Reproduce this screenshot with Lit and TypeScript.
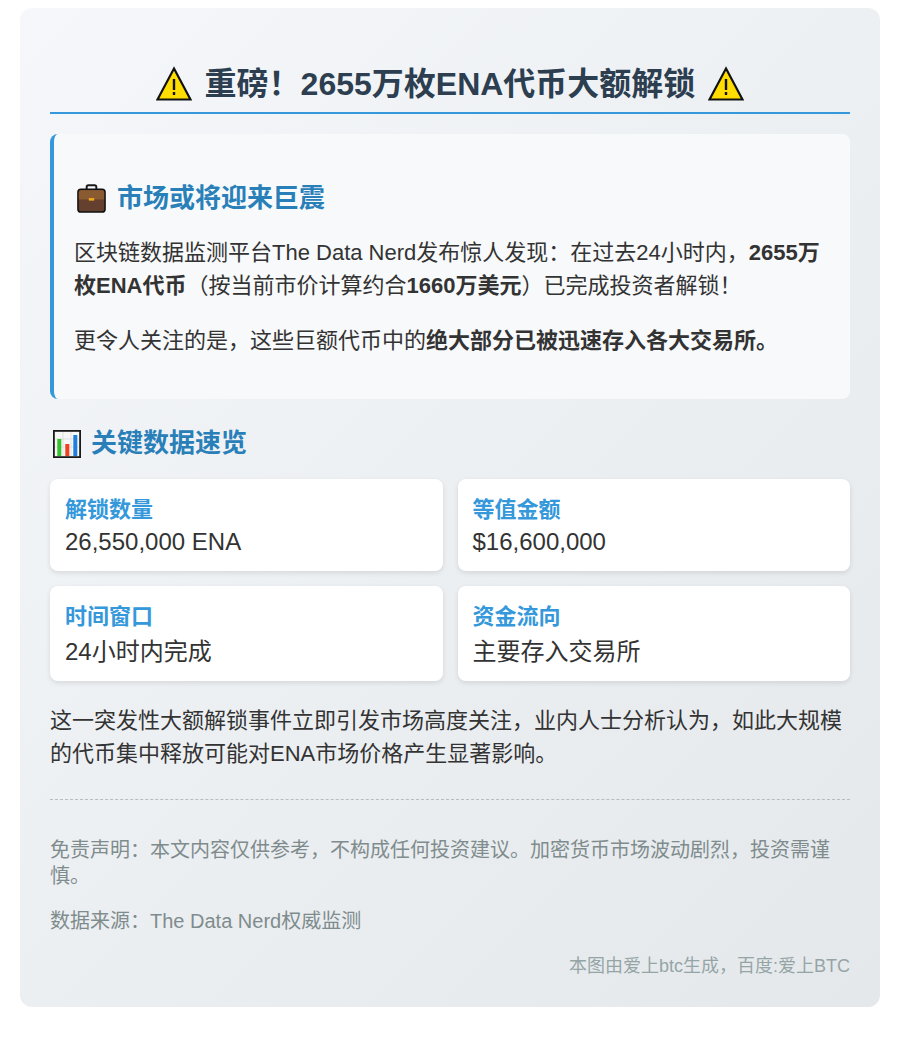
import { LitElement, html, css } from "lit";
import { customElement } from "lit/decorators.js";

const warn = html`<svg class="warn" viewBox="0 0 36 36" aria-hidden="true"><path d="M18 2.5 L34.5 33.5 L1.5 33.5 Z" fill="#ffdd00" stroke="#111" stroke-width="2.2" stroke-linejoin="miter"/><rect x="16.8" y="13" width="2.4" height="11" fill="#111"/><rect x="16.8" y="26" width="2.4" height="3" fill="#111"/></svg>`;
const brief = html`<svg class="ico brief" viewBox="0 0 30 30" aria-hidden="true"><path d="M10 6V3Q10 1.2 11.8 1.2h6.4Q20 1.2 20 3V6" fill="none" stroke="#1a1a1a" stroke-width="2"/><rect x="1" y="5.5" width="28" height="23.5" rx="3" fill="#65402f" stroke="#111" stroke-width="1.6"/><path d="M1.9 8.5Q1.9 6.4 4 6.4h22Q28.1 6.4 28.1 8.5V16H1.9Z" fill="#8a5a30"/><rect x="12.2" y="14.6" width="5.6" height="2.6" fill="#f0a81c"/></svg>`;
const chart = html`<svg class="ico chart" viewBox="0 0 28 28" aria-hidden="true"><rect x=".9" y=".9" width="26.2" height="26.2" fill="#f7f7f7" stroke="#1a1a1a" stroke-width="1.8"/><path d="M2 9h24M2 17h24M10 2v24M18 2v24" stroke="#d6d6d6" stroke-width=".7"/><rect x="4.3" y="9" width="4" height="17" fill="#35c02d"/><rect x="12.3" y="14" width="4" height="12" fill="#f0401f"/><rect x="20.3" y="5" width="4" height="21" fill="#1f7fe0"/></svg>`;

@customElement("app-root")
export class AppRoot extends LitElement {
  static styles = css`
    :host {
      display: block;
      box-sizing: border-box;
      padding: 8px 20px 32px;
      font-family: "Liberation Sans", "Noto Sans CJK SC", sans-serif;
      color: #333;
    }
    .card {
      border-radius: 12px;
      padding: 30px;
      background: linear-gradient(135deg, #f5f7fa 0%, #e4e8eb 100%);
    }
    h1 {
      margin: 22px 0 20px;
      padding-bottom: 4px;
      border-bottom: 2px solid #3498db;
      color: #2c3e50;
      font-size: 32px;
      line-height: 48px;
      font-weight: 700;
      display: flex;
      justify-content: center;
      align-items: center;
      gap: 13px;
    }
    .warn { width: 36px; height: 36px; flex: none; }
    .ico { flex: none; margin-left: 3px; }
    .brief { width: 29px; height: 29px; }
    .chart { width: 28px; height: 28px; }
    .intro {
      background: #f8f9fb;
      border-left: 4px solid #3498db;
      border-radius: 8px;
      padding: 20px;
    }
    h2 {
      color: #2980b9;
      font-size: 26px;
      line-height: 39px;
      font-weight: 700;
      margin: 25px 0 16px;
      display: flex;
      align-items: center;
      gap: 10px;
    }
    .intro h2 { margin: 25px 0 18px; gap: 11px; }
    p {
      margin: 0 0 22px;
      font-size: 22px;
      line-height: 33px;
    }
    b { font-weight: 700; }
    .grid {
      display: grid;
      grid-template-columns: 1fr 1fr;
      gap: 15px;
      margin-bottom: 23px;
    }
    .item {
      background: #fff;
      border-radius: 8px;
      padding: 15px;
      box-shadow: 0 2px 5px rgba(0,0,0,.1);
      font-size: 24px;
      line-height: 29px;
    }
    .label {
      display: block;
      color: #3498db;
      font-weight: 700;
      font-size: 22px;
      line-height: 32px;
      margin-bottom: 4px;
    }
    .num { line-height: 29px; display: block; margin-top: -3px; }
    .body { margin: 0; }
    .foot {
      margin-top: 29px;
      padding-top: 37px;
      border-top: 1px dashed #bbb;
      color: #7f8c8d;
    }
    .foot p { font-size: 20px; line-height: 26px; margin: 0 0 19px; }
    .foot p:nth-child(2) { margin-bottom: 21px; }
    .sign {
      text-align: right;
      color: #95a5a6;
      font-size: 18px;
      line-height: 22px;
    }
  `;

  render() {
    return html`<div class="card">
      <h1>${warn}<span>重磅！2655万枚ENA代币大额解锁</span>${warn}</h1>
      <section class="intro">
        <h2>${brief}<span>市场或将迎来巨震</span></h2>
        <p>区块链数据监测平台The Data Nerd发布惊人发现：在过去24小时内，<b>2655万枚ENA代币</b>（按当前市价计算约合<b>1660万美元</b>）已完成投资者解锁！</p>
        <p>更令人关注的是，这些巨额代币中的<b>绝大部分已被迅速存入各大交易所。</b></p>
      </section>
      <h2>${chart}<span>关键数据速览</span></h2>
      <div class="grid">
        <div class="item"><span class="label">解锁数量</span><span class="num">26,550,000 ENA</span></div>
        <div class="item"><span class="label">等值金额</span><span class="num">$16,600,000</span></div>
        <div class="item"><span class="label">时间窗口</span>24小时内完成</div>
        <div class="item"><span class="label">资金流向</span>主要存入交易所</div>
      </div>
      <p class="body">这一突发性大额解锁事件立即引发市场高度关注，业内人士分析认为，如此大规模的代币集中释放可能对ENA市场价格产生显著影响。</p>
      <div class="foot">
        <p>免责声明：本文内容仅供参考，不构成任何投资建议。加密货币市场波动剧烈，投资需谨慎。</p>
        <p>数据来源：The Data Nerd权威监测</p>
        <div class="sign">本图由爱上btc生成，百度:爱上BTC</div>
      </div>
    </div>`;
  }
}
